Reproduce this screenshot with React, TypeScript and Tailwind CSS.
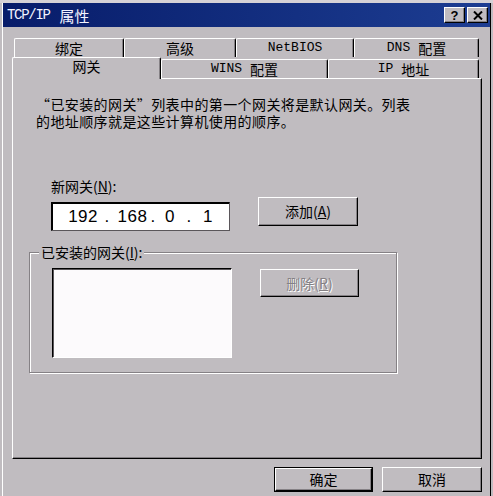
import React from 'react';

const cjk = "font-['Noto_Sans_CJK_SC',sans-serif]";
const mono = "font-['Liberation_Mono','Noto_Sans_CJK_SC',monospace]";

function Btn({ children, className = '', disabled = false }: { children: React.ReactNode; className?: string; disabled?: boolean }) {
  return (
    <div
      className={`flex items-center justify-center bg-[#c0bcc0] border-t border-l border-t-white border-l-white border-r border-b border-r-black border-b-black shadow-[inset_-1px_-1px_0_#858185] text-[14px] ${cjk} ${
        disabled ? 'text-[#858185] [text-shadow:1px_1px_0_#fff]' : 'text-black'
      } ${className}`}
    >
      {children}
    </div>
  );
}

function Tab({ label, w, selected = false }: { label: React.ReactNode; w: string; selected?: boolean }) {
  return (
    <div
      className={`${w} flex items-center justify-center border-t border-l border-t-white border-l-white border-r border-r-black shadow-[inset_-1px_0_0_#858185] rounded-tl-[2px] rounded-tr-[2px] bg-[#c0bcc0] text-[14px] text-black ${cjk} ${
        selected ? 'h-[22px] relative z-10 -mb-px pb-[4px]' : 'h-[19px]'
      }`}
    >
      {label}
    </div>
  );
}

const Lat = ({ children }: { children: React.ReactNode }) => <span className={`${mono} text-[13px]`}>{children}</span>;

export default function App() {
  return (
    <div lang="zh-CN" className={`w-[493px] h-[496px] overflow-hidden bg-[#c0bcc0] ${cjk}`}>
      <div className="h-[3px] bg-[#d6d2d6]" />
      <div className="ml-[2px] w-[489px] h-[493px] border-l border-l-white border-r border-r-black bg-[#c0bcc0]">
        {/* title bar */}
        <div className="h-[24px] flex items-center justify-between pl-[4px] pr-[2px] bg-gradient-to-r from-[#081c6a] to-[#1d3d92]">
          <div className="flex items-center text-[#f4f4ff] leading-none">
            <span className={`${mono} text-[14px] tracking-[-1.3px]`}>TCP/IP</span>
            <span className="ml-[10px] text-[15px]">属性</span>
          </div>
          <div className="flex gap-[2px]">
            <div className="w-[21px] h-[16px] flex items-center justify-center bg-[#c0bcc0] border-t border-l border-white border-r border-b border-r-black border-b-black shadow-[inset_-1px_-1px_0_#858185]">
              <span className="font-['Liberation_Sans',sans-serif] font-bold text-[13px] leading-none text-black">?</span>
            </div>
            <div className="w-[21px] h-[16px] flex items-center justify-center bg-[#c0bcc0] border-t border-l border-white border-r border-b border-r-black border-b-black shadow-[inset_-1px_-1px_0_#858185]">
              <svg width="10" height="9" viewBox="0 0 10 9">
                <path d="M1 0.5 L9 8.5 M9 0.5 L1 8.5" stroke="#000" strokeWidth="2" />
              </svg>
            </div>
          </div>
        </div>

        <div className="pl-[9px] pt-[12px]">
          {/* back row of tabs */}
          <div className="flex ml-[2px] h-[18px] items-end">
            <Tab w="w-[110px]" label="绑定" />
            <Tab w="w-[112px]" label="高级" />
            <Tab w="w-[118px]" label={<Lat>NetBIOS</Lat>} />
            <Tab w="w-[125px]" label={<><Lat>DNS</Lat><span className="ml-[8px]">配置</span></>} />
          </div>
          {/* front row of tabs */}
          <div className="flex h-[21px] items-end">
            <Tab w="w-[149px]" label="网关" selected />
            <Tab w="w-[167px]" label={<><Lat>WINS</Lat><span className="ml-[8px]">配置</span></>} />
            <Tab w="w-[151px]" label={<><Lat>IP</Lat><span className="ml-[8px]">地址</span></>} />
          </div>

          {/* panel */}
          <div className="w-[470px] h-[381px] border-t border-l border-t-white border-l-white border-r border-b border-r-black border-b-black shadow-[inset_-1px_-1px_0_#858185] text-black">
            <div className="pl-[23px] pt-[17px] text-[14px] leading-[17px] whitespace-nowrap tracking-[0.4px] [font-feature-settings:'fwid']">
              <div>“已安装的网关”列表中的第一个网关将是默认网关。列表</div>
              <div>的地址顺序就是这些计算机使用的顺序。</div>
            </div>

            <div className="flex mt-[48px] ml-[38px]">
              <div className="flex flex-col">
                <div className="h-[17px] text-[14px] leading-[17px]">
                  新网关(<span className="underline">N</span>):
                </div>
                <div className="mt-[7px] w-[179px] h-[29px] bg-white border-t border-l border-t-black border-l-black border-r border-b border-r-[#5a565a] border-b-[#5a565a] shadow-[inset_1px_1px_0_#000] flex items-center font-['Liberation_Sans',sans-serif] text-[17px] tracking-[0.5px]">
                  <span className="w-[46px] text-right">192</span>
                  <span className="w-[18px] text-center">.</span>
                  <span className="w-[33px] text-center">168</span>
                  <span className="w-[8px] text-center">.</span>
                  <span className="w-[26px] text-center">0</span>
                  <span className="w-[12px] text-center">.</span>
                  <span className="w-[26px] text-center">1</span>
                </div>
              </div>
              <Btn className="ml-[28px] mt-[19px] w-[100px] h-[29px]">
                添加(<span className="underline">A</span>)
              </Btn>
            </div>

            {/* group box */}
            <div className="mt-[21px] ml-[16px] w-[368px] h-[121px] border border-[#858185] shadow-[1px_1px_0_#fff,inset_1px_1px_0_#fff]">
              <div className="-mt-[9px] ml-[9px] w-fit px-[2px] bg-[#c0bcc0] text-[14px] leading-[17px]">
                已安装的网关(<span className="underline">I</span>):
              </div>
              <div className="flex">
                <div className="mt-[7px] ml-[22px] w-[180px] h-[90px] bg-[#fcfafc] border-t border-l border-t-black border-l-black border-r border-b border-r-white border-b-white shadow-[inset_1px_1px_0_#5a565a]" />
                <Btn disabled className="ml-[28px] mt-[8px] w-[99px] h-[28px]">
                  删除(<span className="underline">R</span>)
                </Btn>
              </div>
            </div>
          </div>

          {/* dialog buttons */}
          <div className="flex mt-[8px] ml-[262px] gap-[9px]">
            <div className="border border-black">
              <Btn className="w-[97px] h-[23px]">确定</Btn>
            </div>
            <Btn className="w-[100px] h-[25px]">取消</Btn>
          </div>
        </div>
      </div>
    </div>
  );
}
